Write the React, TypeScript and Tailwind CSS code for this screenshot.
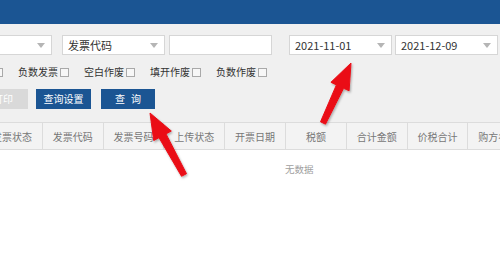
import React from "react";

const font = "font-['Microsoft_YaHei','Noto_Sans_CJK_SC',sans-serif]";

function Caret() {
  return (
    <svg width="8" height="5" viewBox="0 0 8 5" className="shrink-0">
      <path d="M0 0 L8 0 L4 5 Z" fill="#b5b5b5" />
    </svg>
  );
}

function Select({ value, className }: { value?: string; className: string }) {
  return (
    <div className={`h-[20px] shrink-0 bg-white border border-[#d6d6d6] flex items-center justify-between pl-[5px] pr-[6px] text-[11px] text-[#333] ${className}`}>
      <span className="leading-none">{value}</span>
      <Caret />
    </div>
  );
}

function Box() {
  return <span className="w-[9px] h-[9px] shrink-0 border border-[#a9a9a9] bg-[#f7f7f7]" />;
}

function Check({ label }: { label: string }) {
  return (
    <div className="flex items-center gap-[2px] shrink-0">
      <span className="w-[40px] text-[10px] leading-none text-[#333]">{label}</span>
      <Box />
    </div>
  );
}

// arrow polygon from tail to tip
function arrowPoints(x0: number, y0: number, x1: number, y1: number) {
  const dx = x1 - x0;
  const dy = y1 - y0;
  const len = Math.hypot(dx, dy);
  const ux = dx / len;
  const uy = dy / len;
  const nx = -uy;
  const ny = ux;
  const headLen = 26;
  const headW = 10;
  const shaftHead = 4;
  const shaftTail = 2.8;
  const bx = x1 - ux * headLen;
  const by = y1 - uy * headLen;
  const pts = [
    [x0 + nx * shaftTail, y0 + ny * shaftTail],
    [bx + nx * shaftHead, by + ny * shaftHead],
    [bx + nx * headW, by + ny * headW],
    [x1, y1],
    [bx - nx * headW, by - ny * headW],
    [bx - nx * shaftHead, by - ny * shaftHead],
    [x0 - nx * shaftTail, y0 - ny * shaftTail],
  ];
  return pts.map((p) => `${p[0].toFixed(1)},${p[1].toFixed(1)}`).join(" ");
}

const columns = ["发票状态", "发票代码", "发票号码", "上传状态", "开票日期", "税额", "合计金额", "价税合计", "购方名称"];

export default function App() {
  return (
    <div className={`relative w-[500px] h-[273px] overflow-hidden bg-white ${font}`}>
      <div className="h-[24px] bg-[#1b5593]" />

      <div className="bg-[#f0f0f0] pt-[11px]">
        {/* filters */}
        <div className="flex items-center">
          <Select className="ml-[-50px] w-[102px]" />
          <Select value="发票代码" className="ml-[10px] w-[103px]" />
          <div className="ml-[4px] w-[103px] h-[20px] shrink-0 bg-white border border-[#d6d6d6]" />
          <Select value="2021-11-01" className="ml-[17px] w-[103px]" />
          <Select value="2021-12-09" className="ml-[3px] w-[103px]" />
        </div>

        {/* checkboxes */}
        <div className="flex items-center gap-[15px] mt-[12px] h-[10px]">
          <span className="ml-[-6px] flex">
            <Box />
          </span>
          <Check label="负数发票" />
          <Check label="空白作废" />
          <Check label="填开作废" />
          <Check label="负数作废" />
        </div>

        {/* buttons */}
        <div className="flex items-center mt-[12px]">
          <button className="ml-[-22px] w-[50px] h-[20px] shrink-0 bg-[#d9d9d9] text-white text-[10px] leading-none">
            打印
          </button>
          <button className="ml-[8px] w-[55px] h-[20px] shrink-0 bg-[#1b5593] text-white text-[10px] leading-none">
            查询设置
          </button>
          <button className="ml-[10px] w-[54px] h-[20px] shrink-0 bg-[#1b5593] text-white text-[10px] leading-none tracking-[6px] pl-[6px]">
            查询
          </button>
        </div>

        {/* table header */}
        <div className="mt-[13px] flex h-[28px] border-t border-b border-[#dcdcdc] bg-[#f3f3f3] ml-[-18px] w-[600px]">
          {columns.map((c) => (
            <div
              key={c}
              className="w-[60.8px] shrink-0 border-r border-[#dcdcdc] flex items-center justify-center text-[10px] text-[#777] whitespace-nowrap"
            >
              {c}
            </div>
          ))}
        </div>
      </div>

      <div className="pt-[15px] pl-[285px] text-[9.5px] text-[#a0a0a0] leading-none">无数据</div>

      <svg className="absolute inset-0 pointer-events-none" width="500" height="273" viewBox="0 0 500 273">
        <defs>
          <filter id="sh" x="-20%" y="-20%" width="140%" height="140%">
            <feDropShadow dx="1" dy="1.5" stdDeviation="1.2" floodColor="#000" floodOpacity="0.3" />
          </filter>
        </defs>
        <g filter="url(#sh)" fill="#ea1118" strokeLinejoin="round">
          <polygon points={arrowPoints(323, 123, 351, 63)} stroke="#ea1118" strokeWidth="1" />
          <polygon points={arrowPoints(184, 175, 150, 113)} stroke="#ea1118" strokeWidth="1" />
        </g>
      </svg>
    </div>
  );
}
